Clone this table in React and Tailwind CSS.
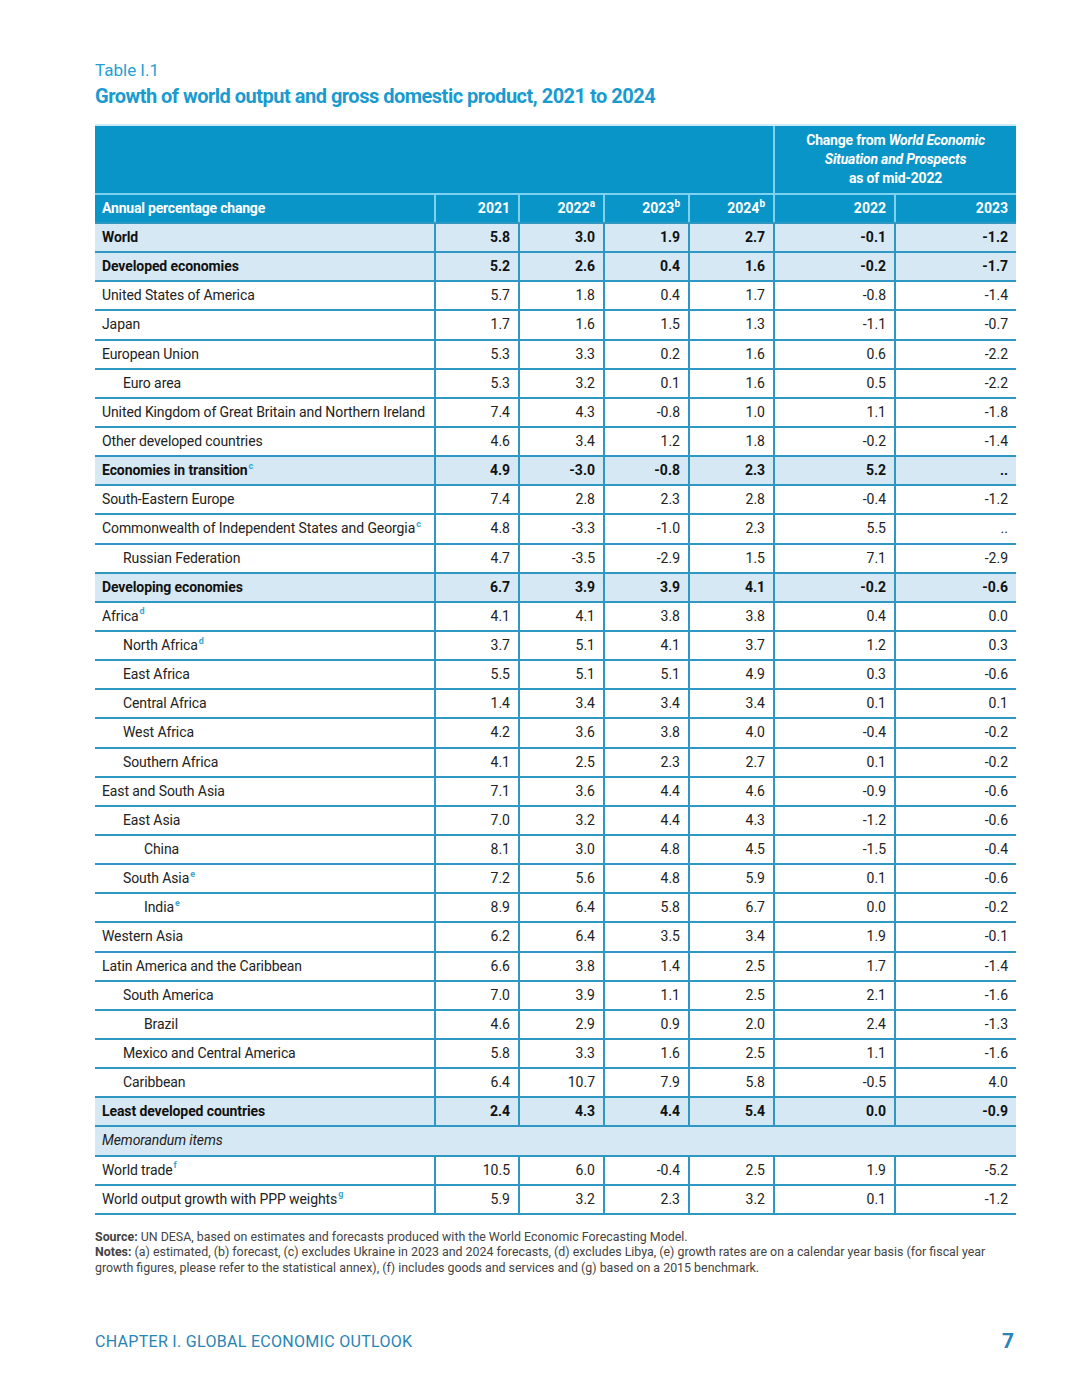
const rows = [
  { label: 'World', bold: true, v: ['5.8', '3.0', '1.9', '2.7', '-0.1', '-1.2'] },
  { label: 'Developed economies', bold: true, v: ['5.2', '2.6', '0.4', '1.6', '-0.2', '-1.7'] },
  { label: 'United States of America', v: ['5.7', '1.8', '0.4', '1.7', '-0.8', '-1.4'] },
  { label: 'Japan', v: ['1.7', '1.6', '1.5', '1.3', '-1.1', '-0.7'] },
  { label: 'European Union', v: ['5.3', '3.3', '0.2', '1.6', '0.6', '-2.2'] },
  { label: 'Euro area', indent: 1, v: ['5.3', '3.2', '0.1', '1.6', '0.5', '-2.2'] },
  { label: 'United Kingdom of Great Britain and Northern Ireland', v: ['7.4', '4.3', '-0.8', '1.0', '1.1', '-1.8'] },
  { label: 'Other developed countries', v: ['4.6', '3.4', '1.2', '1.8', '-0.2', '-1.4'] },
  { label: 'Economies in transition', sup: 'c', bold: true, v: ['4.9', '-3.0', '-0.8', '2.3', '5.2', '..'] },
  { label: 'South-Eastern Europe', v: ['7.4', '2.8', '2.3', '2.8', '-0.4', '-1.2'] },
  { label: 'Commonwealth of Independent States and Georgia', sup: 'c', v: ['4.8', '-3.3', '-1.0', '2.3', '5.5', '..'] },
  { label: 'Russian Federation', indent: 1, v: ['4.7', '-3.5', '-2.9', '1.5', '7.1', '-2.9'] },
  { label: 'Developing economies', bold: true, v: ['6.7', '3.9', '3.9', '4.1', '-0.2', '-0.6'] },
  { label: 'Africa', sup: 'd', v: ['4.1', '4.1', '3.8', '3.8', '0.4', '0.0'] },
  { label: 'North Africa', sup: 'd', indent: 1, v: ['3.7', '5.1', '4.1', '3.7', '1.2', '0.3'] },
  { label: 'East Africa', indent: 1, v: ['5.5', '5.1', '5.1', '4.9', '0.3', '-0.6'] },
  { label: 'Central Africa', indent: 1, v: ['1.4', '3.4', '3.4', '3.4', '0.1', '0.1'] },
  { label: 'West Africa', indent: 1, v: ['4.2', '3.6', '3.8', '4.0', '-0.4', '-0.2'] },
  { label: 'Southern Africa', indent: 1, v: ['4.1', '2.5', '2.3', '2.7', '0.1', '-0.2'] },
  { label: 'East and South Asia', v: ['7.1', '3.6', '4.4', '4.6', '-0.9', '-0.6'] },
  { label: 'East Asia', indent: 1, v: ['7.0', '3.2', '4.4', '4.3', '-1.2', '-0.6'] },
  { label: 'China', indent: 2, v: ['8.1', '3.0', '4.8', '4.5', '-1.5', '-0.4'] },
  { label: 'South Asia', sup: 'e', indent: 1, v: ['7.2', '5.6', '4.8', '5.9', '0.1', '-0.6'] },
  { label: 'India', sup: 'e', indent: 2, v: ['8.9', '6.4', '5.8', '6.7', '0.0', '-0.2'] },
  { label: 'Western Asia', v: ['6.2', '6.4', '3.5', '3.4', '1.9', '-0.1'] },
  { label: 'Latin America and the Caribbean', v: ['6.6', '3.8', '1.4', '2.5', '1.7', '-1.4'] },
  { label: 'South America', indent: 1, v: ['7.0', '3.9', '1.1', '2.5', '2.1', '-1.6'] },
  { label: 'Brazil', indent: 2, v: ['4.6', '2.9', '0.9', '2.0', '2.4', '-1.3'] },
  { label: 'Mexico and Central America', indent: 1, v: ['5.8', '3.3', '1.6', '2.5', '1.1', '-1.6'] },
  { label: 'Caribbean', indent: 1, v: ['6.4', '10.7', '7.9', '5.8', '-0.5', '4.0'] },
  { label: 'Least developed countries', bold: true, v: ['2.4', '4.3', '4.4', '5.4', '0.0', '-0.9'] },
  { label: 'Memorandum items', memo: true },
  { label: 'World trade', sup: 'f', v: ['10.5', '6.0', '-0.4', '2.5', '1.9', '-5.2'] },
  { label: 'World output growth with PPP weights', sup: 'g', v: ['5.9', '3.2', '2.3', '3.2', '0.1', '-1.2'] },
];

const cols = 'grid grid-cols-[339px_84px_85px_85px_85px_121px_122px]';
const indents = ['pl-[7px]', 'pl-[28px]', 'pl-[49px]'];

function Row({ r }) {
  if (r.memo) {
    return (
      <div className="h-[29.15px] bg-[#d6e8f3] border-b-2 border-[#2e97c2] flex items-center pl-[7px] italic text-[14px] tracking-[-0.1px] text-[#222]">
        {r.label}
      </div>
    );
  }
  const bg = r.bold ? 'bg-[#d6e8f3]' : 'bg-white';
  const weight = r.bold ? 'font-bold text-[#111]' : 'text-[#222]';
  return (
    <div className={`${cols} h-[29.15px] border-b-2 border-[#2e97c2] ${bg} ${weight} text-[14px]`}>
      <div className={`flex items-center ${indents[r.indent || 0]} whitespace-nowrap tracking-[-0.1px]`}>
        {r.label}
        {r.sup && <sup className="text-[9px] font-bold text-[#3aa6d0] ml-[1px] -top-[5px]">{r.sup}</sup>}
      </div>
      {r.v.map((x, i) => (
        <div key={i} className="flex items-center justify-end pr-[8px] border-l-2 border-[#2e97c2]">
          {x}
        </div>
      ))}
    </div>
  );
}

export default function App() {
  return (
    <div className="w-[1080px] h-[1398px] bg-white font-['Roboto',sans-serif] text-[#222]">
      <div className="w-[921px] ml-[95px] pt-[60px]">
        <div className="text-[17px] text-[#1f9fd2] leading-[20px]">Table I.1</div>
        <h1 className="text-[20px] font-bold tracking-[-0.5px] text-[#1a9bcf] leading-[28px] mt-[2px]">
          Growth of world output and gross domestic product, 2021 to 2024
        </h1>

        <div className="mt-[14px] border-t-2 border-[#c9ecf7]">
          <div className="flex h-[69px] bg-[#0a95c8] border-b-2 border-[#7fd2ef]">
            <div className="w-[678px]" />
            <div className="flex-1 border-l-2 border-[#7fd2ef] flex items-center justify-center text-center text-white font-bold text-[14px] tracking-[-0.2px] leading-[19px]">
              <div>
                Change from <i>World Economic</i>
                <br />
                <i>Situation and Prospects</i>
                <br />
                as of mid-2022
              </div>
            </div>
          </div>
          <div className={`${cols} h-[29px] bg-[#0a95c8] text-white font-bold text-[14px] border-b-2 border-[#2e97c2]`}>
            <div className="flex items-center pl-[7px] tracking-[-0.2px]">Annual percentage change</div>
            {[['2021'], ['2022', 'a'], ['2023', 'b'], ['2024', 'b'], ['2022'], ['2023']].map(([y, s], i) => (
              <div key={i} className="flex items-center justify-end pr-[8px] border-l-2 border-[#7fd2ef]">
                {y}
                {s && <sup className="text-[10px] -top-[5px]">{s}</sup>}
              </div>
            ))}
          </div>
          {rows.map((r, i) => (
            <Row key={i} r={r} />
          ))}
        </div>

        <div className="mt-[14px] text-[12.4px] leading-[15.5px] text-[#444]">
          <p>
            <b>Source:</b> UN DESA, based on estimates and forecasts produced with the World Economic Forecasting Model.
          </p>
          <p>
            <b>Notes:</b> (a) estimated, (b) forecast, (c) excludes Ukraine in 2023 and 2024 forecasts, (d) excludes Libya, (e) growth rates are on a calendar year basis (for fiscal year growth figures, please refer to the statistical annex), (f) includes goods and services and (g) based on a 2015 benchmark.
          </p>
        </div>

        <div className="mt-[51px] flex items-center justify-between">
          <span className="text-[16px] tracking-[0.3px] text-[#2a84b5]">CHAPTER I. GLOBAL ECONOMIC OUTLOOK</span>
          <span className="text-[21px] font-bold text-[#2a84b5] pr-[2px]">7</span>
        </div>
      </div>
    </div>
  );
}
